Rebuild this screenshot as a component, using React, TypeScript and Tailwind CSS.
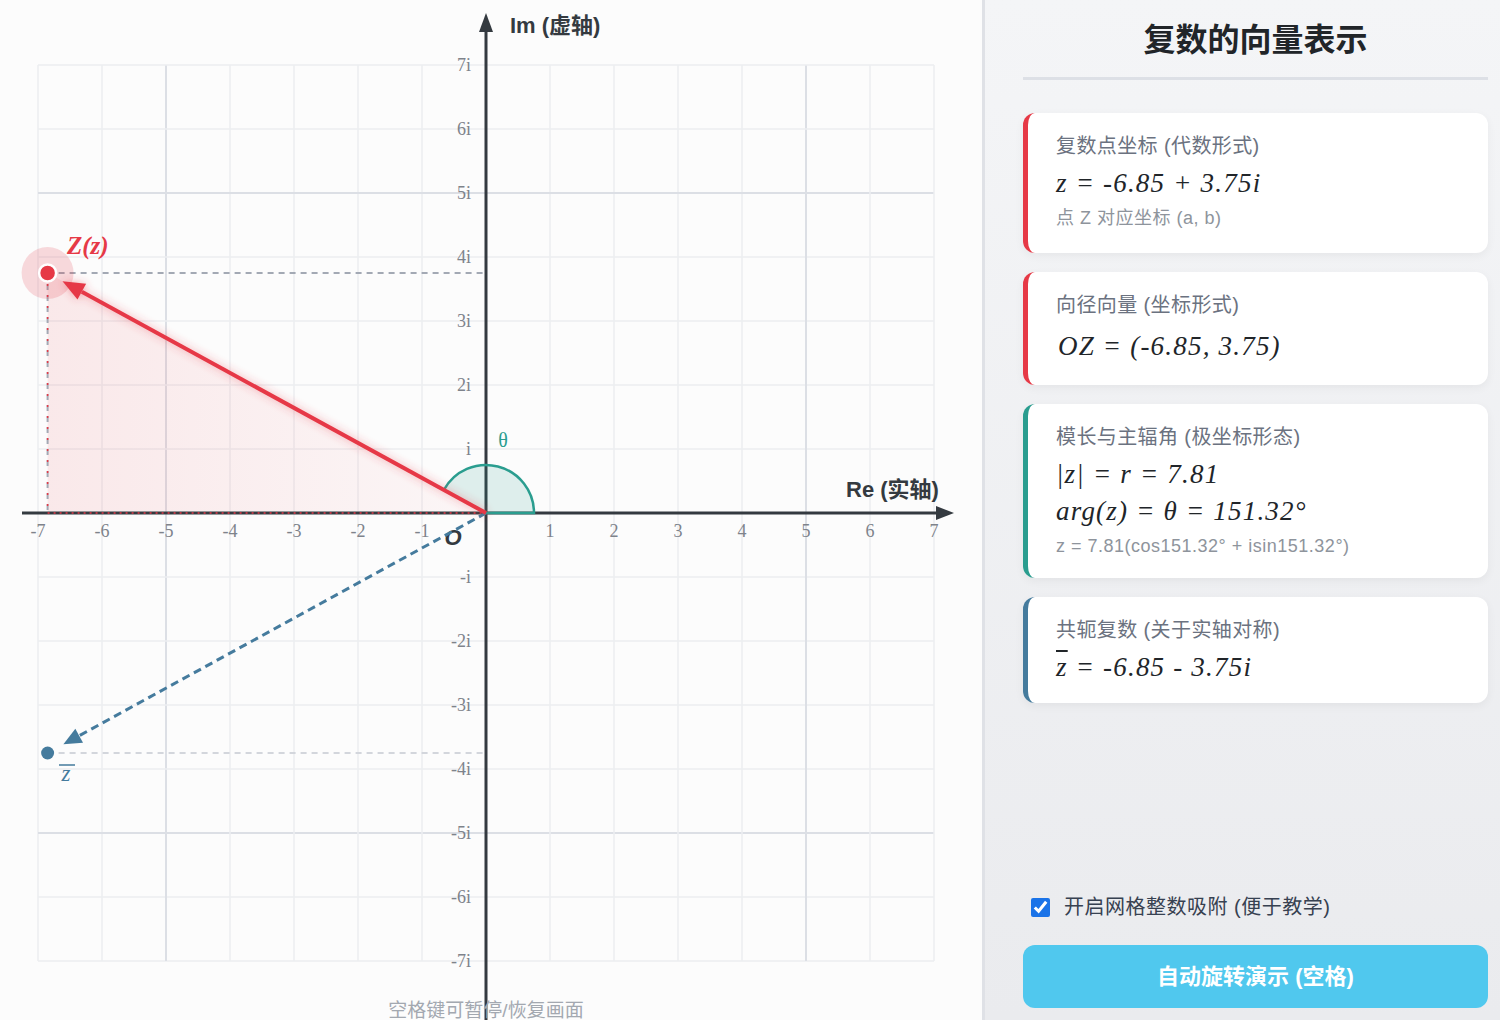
import React from 'react';

// plane geometry: origin + 64px per unit
const OX = 486;
const OY = 513;
const U = 64;
const RED = '#e63946';
const TEAL = '#2a9d8f';
const BLUE = '#457b9d';
const SERIF = '"Liberation Serif", "Times New Roman", serif';
const SANS = '"Liberation Sans", "Noto Sans CJK SC", sans-serif';

const px = (x: number) => OX + x * U;
const py = (y: number) => OY - y * U;

function head(fx: number, fy: number, tx: number, ty: number, len: number, w: number) {
  const d = Math.hypot(tx - fx, ty - fy);
  const ux = (tx - fx) / d;
  const uy = (ty - fy) / d;
  const bx = tx - ux * len;
  const by = ty - uy * len;
  return {
    pts: `${tx},${ty} ${bx - uy * w},${by + ux * w} ${bx + uy * w},${by - ux * w}`,
    bx,
    by,
  };
}

function Plane() {
  const a = -6.85;
  const b = 3.75;
  const zx = px(a);
  const zy = py(b);
  const cy = py(-b);
  const theta = Math.atan2(b, a);
  const ticks = [-7, -6, -5, -4, -3, -2, -1, 0, 1, 2, 3, 4, 5, 6, 7];

  // red vector tip stops short of the point
  const d = Math.hypot(zx - OX, zy - OY);
  const ux = (zx - OX) / d;
  const uy = (zy - OY) / d;
  const redTip = head(OX, OY, zx - ux * 17, zy - uy * 17, 22, 9);
  const dc = Math.hypot(zx - OX, cy - OY);
  const cx2 = (zx - OX) / dc;
  const cy2 = (cy - OY) / dc;
  const blueTip = head(OX, OY, zx - cx2 * 18, cy - cy2 * 18, 18, 8);

  const r = 48;
  const ax = OX + r * Math.cos(theta);
  const ay = OY - r * Math.sin(theta);

  return (
    <svg width="982" height="1020" viewBox="0 0 982 1020" className="block">
      <defs>
        <linearGradient id="tri" x1="0" y1="0" x2="1" y2="0">
          <stop offset="0" stopColor={RED} stopOpacity="0.1" />
          <stop offset="1" stopColor={RED} stopOpacity="0.03" />
        </linearGradient>
        <filter id="glow" x="-20%" y="-20%" width="140%" height="140%">
          <feDropShadow dx="0" dy="0" stdDeviation="4" floodColor={RED} floodOpacity="0.45" />
        </filter>
      </defs>

      {/* grid */}
      {ticks.map((k) => (
        <g key={'g' + k}>
          <line x1={px(k)} y1={65} x2={px(k)} y2={961} stroke={Math.abs(k) === 5 ? '#dcdfe5' : '#eceef1'} strokeWidth={Math.abs(k) === 5 ? 2 : 1.5} />
          <line x1={38} y1={py(k)} x2={934} y2={py(k)} stroke={Math.abs(k) === 5 ? '#dcdfe5' : '#eceef1'} strokeWidth={Math.abs(k) === 5 ? 2 : 1.5} />
        </g>
      ))}

      {/* tick labels */}
      {ticks.filter((k) => k !== 0).map((k) => (
        <text key={'x' + k} x={px(k)} y={537} textAnchor="middle" fontFamily={SERIF} fontSize="18" fill="#7e838b">
          {k}
        </text>
      ))}
      {ticks.filter((k) => k !== 0).map((k) => (
        <text key={'y' + k} x={471} y={py(k) + 6} textAnchor="end" fontFamily={SERIF} fontSize="18" fill="#7e838b">
          {k === 1 ? 'i' : k === -1 ? '-i' : `${k}i`}
        </text>
      ))}

      {/* triangle projection */}
      <polygon points={`${OX},${OY} ${zx},${OY} ${zx},${zy}`} fill="url(#tri)" />

      {/* axes */}
      <line x1={22} y1={OY} x2={940} y2={OY} stroke="#343a40" strokeWidth="3" />
      <polygon points={`954,${OY} 936,${OY - 7} 936,${OY + 7}`} fill="#343a40" />
      <line x1={OX} y1={1020} x2={OX} y2={28} stroke="#343a40" strokeWidth="3" />
      <polygon points={`${OX},13 ${OX - 7},32 ${OX + 7},32`} fill="#343a40" />

      <text x={510} y={33} fontFamily={SANS} fontSize="22" fontWeight="700" fill="#343a40">Im (虚轴)</text>
      <text x={846} y={497} fontFamily={SANS} fontSize="22" fontWeight="700" fill="#343a40">Re (实轴)</text>
      <text x={453} y={545} textAnchor="middle" fontFamily={SANS} fontSize="22" fontWeight="700" fontStyle="italic" fill="#343a40">O</text>

      {/* projections */}
      <line x1={zx} y1={zy} x2={OX} y2={zy} stroke="#a3a9b4" strokeWidth="2" strokeDasharray="6 5" />
      <line x1={zx} y1={zy} x2={zx} y2={OY} stroke="#a3a9b4" strokeWidth="2" strokeDasharray="6 5" />
      <line x1={zx} y1={cy} x2={OX} y2={cy} stroke="#d3d6dc" strokeWidth="2" strokeDasharray="6 5" />
      <line x1={zx} y1={OY} x2={OX} y2={OY} stroke={RED} strokeWidth="1.5" strokeDasharray="2 4" />
      <line x1={zx} y1={zy} x2={zx} y2={OY} stroke={RED} strokeWidth="1.5" strokeDasharray="2 9" />

      {/* theta */}
      <path d={`M ${OX} ${OY} L ${OX + r} ${OY} A ${r} ${r} 0 0 0 ${ax} ${ay} Z`} fill={TEAL} fillOpacity="0.14" stroke="none" />
      <path d={`M ${OX} ${OY} L ${OX + r} ${OY} A ${r} ${r} 0 0 0 ${ax} ${ay}`} fill="none" stroke={TEAL} strokeWidth="2.5" />
      <text x={503} y={447} textAnchor="middle" fontFamily={SERIF} fontSize="20" fill={TEAL}>θ</text>

      {/* conjugate vector */}
      <line x1={OX} y1={OY} x2={blueTip.bx} y2={blueTip.by} stroke={BLUE} strokeWidth="3" strokeDasharray="8 5" />
      <polygon points={blueTip.pts} fill={BLUE} />
      <circle cx={zx} cy={cy} r="6.5" fill={BLUE} />
      <text x={66} y={781} textAnchor="middle" fontFamily={SERIF} fontSize="23" fontStyle="italic" fill={BLUE}>z</text>
      <line x1={59} y1={765} x2={75} y2={765} stroke={BLUE} strokeWidth="1.5" />

      {/* main vector */}
      <g filter="url(#glow)">
        <line x1={OX} y1={OY} x2={redTip.bx} y2={redTip.by} stroke={RED} strokeWidth="4" />
        <polygon points={redTip.pts} fill={RED} />
      </g>
      <circle cx={zx} cy={zy} r="26" fill={RED} fillOpacity="0.18" />
      <circle cx={zx} cy={zy} r="8.5" fill={RED} stroke="#fff" strokeWidth="2.5" />
      <text x={67} y={254} fontFamily={SERIF} fontSize="25" fontWeight="700" fontStyle="italic" fill={RED}>Z(z)</text>

      <text x={486} y={1017} textAnchor="middle" fontFamily={SANS} fontSize="19" fill="#a3a8b0">空格键可暂停/恢复画面</text>
    </svg>
  );
}

function Card({ color, title, children, sub, mathTop = 'mt-[7px]', bottom = 'pb-[20px]' }: { color: string; title: string; children: React.ReactNode; sub?: string; mathTop?: string; bottom?: string }) {
  return (
    <div className={`rounded-xl border-l-[5px] bg-white pl-[28px] pr-4 pt-[21px] shadow-[0_3px_10px_rgba(0,0,0,0.05)] ${bottom} ${color}`}>
      <div className="text-[20px] leading-[24px] tracking-[0.4px] text-[#6b7280]">{title}</div>
      <div className={`${mathTop} font-['Liberation_Serif','Times_New_Roman',serif] text-[27px] italic leading-[37px] tracking-[1.2px] text-[#212529]`}>{children}</div>
      {sub && <div className="mt-[5px] text-[18px] leading-[22px] tracking-[0.5px] text-[#8e949c]">{sub}</div>}
    </div>
  );
}

export default function App() {
  return (
    <div className="flex h-[1020px] w-[1500px] overflow-hidden bg-[#fcfcfc] font-['Liberation_Sans','Noto_Sans_CJK_SC',sans-serif]">
      <div className="w-[982px] shrink-0">
        <Plane />
      </div>
      <div className="flex flex-1 flex-col border-l-[3px] border-[#dfe1e6] bg-gradient-to-b from-[#f4f5f7] to-[#eaebee] pl-[38px] pr-[12px] pb-[12px]">
        <div className="border-b-[3px] border-[#dde0e6] pt-[21px] pb-[18px] text-center text-[32px] font-bold leading-[38px] text-[#212529]">
          复数的向量表示
        </div>
        <div className="mt-[33px] flex flex-col gap-[19px]">
          <Card color="border-[#e63946]" title="复数点坐标 (代数形式)" sub="点 Z 对应坐标 (a, b)" bottom="pb-[24px]">
            z = -6.85 + 3.75i
          </Card>
          <Card color="border-[#e63946]" title="向径向量 (坐标形式)" mathTop="mt-[11px]">
            <span className="pl-[2px]">OZ</span> = (-6.85, 3.75)
          </Card>
          <Card color="border-[#2a9d8f]" title="模长与主辐角 (极坐标形态)" sub="z = 7.81(cos151.32° + isin151.32°)" bottom="pb-[21px]">
            <div>|z| = r = 7.81</div>
            <div>arg(z) = θ = 151.32°</div>
          </Card>
          <Card color="border-[#457b9d]" title="共轭复数 (关于实轴对称)" bottom="pb-[17px]">
            <span className="overline">z</span> = -6.85 - 3.75i
          </Card>
        </div>
        <div className="flex-1" />
        <label className="flex items-center gap-[14px] pl-[8px] text-[20px] leading-[28px] tracking-[0.5px] text-[#374151]">
          <input type="checkbox" defaultChecked className="h-[19px] w-[19px] accent-[#1a73e8]" />
          开启网格整数吸附 (便于教学)
        </label>
        <button className="mt-[24px] h-[63px] w-full rounded-xl bg-[#50c8ee] text-[22px] font-bold text-white">
          自动旋转演示 (空格)
        </button>
      </div>
    </div>
  );
}
